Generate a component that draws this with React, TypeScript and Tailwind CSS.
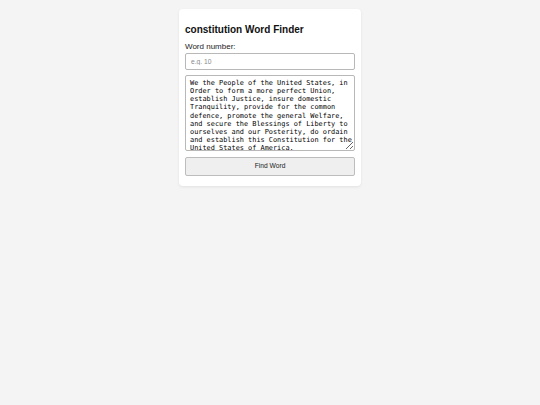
export default function App() {
  const text =
    'We the People of the United States, in Order to form a more perfect Union, establish Justice, insure domestic Tranquility, provide for the common defence, promote the general Welfare, and secure the Blessings of Liberty to ourselves and our Posterity, do ordain and establish this Constitution for the United States of America.';
  return (
    <div className="min-h-[405px] bg-[#f4f4f4] pt-[9px]" style={{ fontFamily: '"Liberation Sans", Arial, sans-serif' }}>
      <div className="mx-auto w-[182px] rounded-[4px] bg-white px-[6px] pt-[15px] pb-[10px] shadow-[0_1px_3px_rgba(0,0,0,0.08)]">
        <h2 className="text-[10px] leading-[12px] font-bold text-[#111]">constitution Word Finder</h2>
        <label className="mt-[6px] block text-[8px] leading-[10px] text-[#222]">Word number:</label>
        <input
          type="text"
          placeholder="e.g. 10"
          className="mt-[1px] block h-[17px] w-full rounded-[2px] border border-[#b8b8b8] px-[5px] text-[6.7px] text-[#222] placeholder:text-[#8a8a8a] outline-none"
        />
        <textarea
          defaultValue={text}
          className="mt-[5px] block h-[76px] w-full resize-y rounded-[2px] border border-[#b8b8b8] pl-[4px] pr-0 pt-[3px] pb-[2px] text-[6.9px] leading-[8.15px] text-black outline-none"
          style={{ fontFamily: '"DejaVu Sans Mono", monospace' }}
        />
        <button className="mt-[6px] block h-[19px] w-full rounded-[2px] border border-[#bdbdbd] bg-[#efefef] text-[6.7px] text-[#222]">
          Find Word
        </button>
      </div>
    </div>
  );
}
